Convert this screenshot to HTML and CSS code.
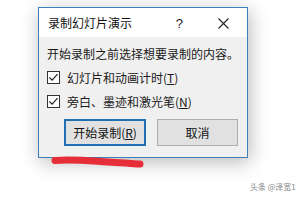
FILE: index.html
```html
<!DOCTYPE html>
<html lang="zh">
<head>
<meta charset="utf-8">
<link rel="stylesheet" href="styles.css">
</head>
<body>
<div class="dialog">
  <div class="titlebar">
    <span class="title">录制幻灯片演示</span>
    <span class="help">?</span>
    <svg class="close" width="11" height="11" viewBox="0 0 11 11"><path d="M0.5 0.5 L10.5 10.5 M10.5 0.5 L0.5 10.5" stroke="#222" stroke-width="1.1" fill="none"/></svg>
  </div>
  <div class="content">
    <div class="prompt">开始录制之前选择想要录制的内容。</div>
    <div class="row row1">
      <span class="box"><svg width="11" height="11" viewBox="0 0 11 11"><path d="M1.5 5.5 L4.2 8.2 L9.5 2.2" stroke="#222" stroke-width="1.2" fill="none"/></svg></span>
      <span class="label">幻灯片和动画计时(<u>T</u>)</span>
    </div>
    <div class="row row2">
      <span class="box"><svg width="11" height="11" viewBox="0 0 11 11"><path d="M1.5 5.5 L4.2 8.2 L9.5 2.2" stroke="#222" stroke-width="1.2" fill="none"/></svg></span>
      <span class="label">旁白、墨迹和激光笔(<u>N</u>)</span>
    </div>
    <div class="buttons">
      <button class="btn primary">开始录制(<u>R</u>)</button>
      <button class="btn">取消</button>
    </div>
  </div>
</div>
<svg class="marker" width="300" height="200" viewBox="0 0 300 200"><path d="M55 160.5 C 75 158.5, 95 161.5, 115 162.5 S 135 164, 140 164" stroke="#e62e38" stroke-width="7" stroke-linecap="round" fill="none"/></svg>
<div class="watermark">头条 @泽宽1</div>
</body>
</html>
```
FILE: styles.css
```css
html, body {
  margin: 0;
  padding: 0;
}
body {
  width: 300px;
  height: 200px;
  background: #ffffff;
  font-family: "Noto Sans CJK SC", "Noto Sans", sans-serif;
  font-size: 12px;
  color: #1a1a1a;
  overflow: hidden;
  position: relative;
}
.dialog {
  margin: 7px 0 0 38px;
  width: 210px;
  height: 151px;
  box-sizing: border-box;
  border: 1px solid #3d7fb8;
  background: #f0f0f0;
  box-shadow: 2px 4px 18px rgba(0, 0, 0, 0.28);
  display: flex;
  flex-direction: column;
}
.titlebar {
  height: 29px;
  background: #ffffff;
  display: flex;
  align-items: center;
  padding-left: 9px;
  padding-top: 1px;
  box-sizing: border-box;
}
.title {
  font-size: 12px;
  line-height: 16px;
  color: #111;
  flex: 1;
}
.help {
  font-family: "Liberation Sans", sans-serif;
  font-size: 13px;
  color: #222;
  margin-right: 35px;
}
.close {
  margin-right: 18px;
}
.content {
  padding: 9px 0 0 8px;
}
.prompt {
  line-height: 16px;
}
.row {
  display: flex;
  align-items: center;
  height: 16px;
}
.row1 { margin-top: 7px; }
.row2 { margin-top: 8px; }
.box {
  width: 11px;
  height: 11px;
  border: 1px solid #333;
  background: #fff;
  display: flex;
  margin-right: 7px;
}
.label u, .btn u {
  text-decoration: underline;
  text-underline-offset: 1px;
}
.buttons {
  display: flex;
  gap: 11px;
  margin: 10px 0 0 17px;
}
.btn {
  font-family: "Noto Sans CJK SC", "Noto Sans", sans-serif;
  font-size: 12px;
  color: #111;
  height: 27px;
  width: 81px;
  box-sizing: border-box;
  background: #e1e1e1;
  border: 1px solid #adadad;
  padding: 0;
  margin: 0;
}
.btn.primary {
  width: 82px;
  border: 2px solid #1f6fb3;
}
.marker {
  position: absolute;
  left: 0;
  top: 0;
}
.watermark {
  position: absolute;
  left: 250px;
  top: 182px;
  font-size: 8px;
  line-height: 10px;
  color: #8a8a8a;
}
```
